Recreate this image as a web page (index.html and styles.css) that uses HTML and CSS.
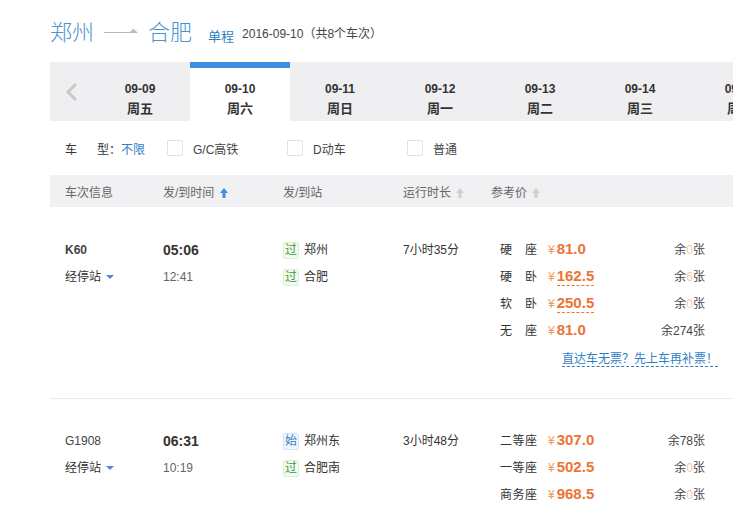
FILE: index.html
```html
<!DOCTYPE html>
<html lang="zh-CN">

<head>
  <meta charset="UTF-8" />
  <meta name="viewport" content="width=device-width, initial-scale=1.0" />
  <title>郑州 - 合肥</title>
  <link rel="stylesheet" href="styles.css">
</head>

<body>
  <div class="page">
    <div class="title">
      <span class="city">郑州</span>
      <svg class="way" width="34" height="10" viewBox="0 0 34 10">
        <line x1="0" y1="7.5" x2="26" y2="7.5" stroke="#b5b5b5" stroke-width="1" />
        <path d="M25 8 L29.5 3.5 L34 8 Z" fill="#bdbdbd" />
      </svg>
      <span class="city">合肥</span>
      <span class="trip">单程</span>
      <span class="info">2016-09-10（共8个车次）</span>
    </div>

    <div class="dates">
      <div class="prev">
        <svg width="14" height="20" viewBox="0 0 14 20">
          <path d="M11 2 L3 10 L11 18" fill="none" stroke="#c9c9cb" stroke-width="3" />
        </svg>
      </div>
      <div class="day"><b>09-09</b><b class="wd">周五</b></div>
      <div class="day active"><b>09-10</b><b class="wd">周六</b></div>
      <div class="day"><b>09-11</b><b class="wd">周日</b></div>
      <div class="day"><b>09-12</b><b class="wd">周一</b></div>
      <div class="day"><b>09-13</b><b class="wd">周二</b></div>
      <div class="day"><b>09-14</b><b class="wd">周三</b></div>
      <div class="day"><b>09-15</b><b class="wd">周四</b></div>
    </div>

    <div class="filter">
      <span class="label">车<i class="sp"></i>型：</span><span class="any">不限</span>
      <label class="opt"><span class="box"></span>G/C高铁</label>
      <label class="opt"><span class="box"></span>D动车</label>
      <label class="opt"><span class="box"></span>普通</label>
    </div>

    <div class="thead">
      <span>车次信息</span>
      <span>发/到时间 <svg class="sort" width="8" height="10" viewBox="0 0 8 10"><path d="M4 0 L8 5 L5.5 5 L5.5 10 L2.5 10 L2.5 5 L0 5 Z" fill="#3b8ee0" /></svg></span>
      <span>发/到站</span>
      <span>运行时长 <svg class="sort" width="8" height="10" viewBox="0 0 8 10"><path d="M4 0 L8 5 L5.5 5 L5.5 10 L2.5 10 L2.5 5 L0 5 Z" fill="#cfcfcf" /></svg></span>
      <span>参考价 <svg class="sort" width="8" height="10" viewBox="0 0 8 10"><path d="M4 0 L8 5 L5.5 5 L5.5 10 L2.5 10 L2.5 5 L0 5 Z" fill="#cfcfcf" /></svg></span>
    </div>

    <div class="train first">
      <div class="col">
        <div class="no bold">K60</div>
        <div class="stops">经停站 <span class="caret"></span></div>
      </div>
      <div class="col">
        <div class="dep">05:06</div>
        <div class="arr">12:41</div>
      </div>
      <div class="col">
        <div><span class="tag pass">过</span>郑州</div>
        <div><span class="tag pass">过</span>合肥</div>
      </div>
      <div class="col">
        <div>7小时35分</div>
      </div>
      <div class="col seats">
        <div class="seat"><span class="name">硬 座</span><span class="price">¥<b>81.0</b></span><span class="left">余<em>0</em>张</span></div>
        <div class="seat"><span class="name">硬 卧</span><span class="price">¥<b class="dash">162.5</b></span><span class="left">余<em>6</em>张</span></div>
        <div class="seat"><span class="name">软 卧</span><span class="price">¥<b class="dash">250.5</b></span><span class="left">余<em>0</em>张</span></div>
        <div class="seat"><span class="name">无 座</span><span class="price">¥<b>81.0</b></span><span class="left">余274张</span></div>
        <div class="tip"><a href="#">直达车无票？先上车再补票！</a></div>
      </div>
    </div>

    <div class="train">
      <div class="col">
        <div class="no">G1908</div>
        <div class="stops">经停站 <span class="caret"></span></div>
      </div>
      <div class="col">
        <div class="dep">06:31</div>
        <div class="arr">10:19</div>
      </div>
      <div class="col">
        <div><span class="tag start">始</span>郑州东</div>
        <div><span class="tag pass">过</span>合肥南</div>
      </div>
      <div class="col">
        <div>3小时48分</div>
      </div>
      <div class="col seats">
        <div class="seat"><span class="name">二等座</span><span class="price">¥<b>307.0</b></span><span class="left">余78张</span></div>
        <div class="seat"><span class="name">一等座</span><span class="price">¥<b>502.5</b></span><span class="left">余<em>0</em>张</span></div>
        <div class="seat"><span class="name">商务座</span><span class="price">¥<b>968.5</b></span><span class="left">余<em>0</em>张</span></div>
      </div>
    </div>
  </div>
</body>

</html>
```

FILE: styles.css
```css
*,
::before,
::after {
  box-sizing: border-box;
}

html {
  font-family: 'Liberation Sans', Arial, 'Noto Sans CJK SC', sans-serif;
  font-size: 12px;
  color: #333;
}

body {
  margin: 0;
  overflow: hidden;
}

.page {
  padding-left: 50px;
  width: 800px;
}

/* title */
.title {
  height: 62px;
  display: flex;
  align-items: center;
  padding-bottom: 2px;
}

.city {
  font-size: 22px;
  color: #4a93cf;
  font-family: 'Noto Sans CJK SC', sans-serif;
  font-weight: 300;
}

.way {
  margin: 0 10px 0 10px;
}

.trip {
  font-size: 13px;
  color: #2f7fc4;
  margin: 10px 8px 0 16px;
}

.info {
  margin-top: 4px;
  color: #444;
}

/* dates */
.dates {
  display: flex;
  height: 59px;
  background: #efeef0;
}

.prev {
  width: 40px;
  flex: none;
  display: flex;
  align-items: center;
  justify-content: center;
  padding-left: 4px;
}

.day {
  width: 100px;
  flex: none;
  display: flex;
  flex-direction: column;
  align-items: center;
  padding-top: 12px;
  line-height: 19px;
  border-top: 6px solid transparent;
  color: #333;
}

.day .wd {
  font-size: 13px;
}

.day.active {
  background: #fff;
  border-top-color: #3b8ee0;
}

/* filter */
.filter {
  height: 54px;
  display: flex;
  align-items: center;
  padding-left: 15px;
}

.label .sp {
  display: inline-block;
  width: 20px;
}

.any {
  color: #2f7fc4;
  width: 46px;
}

.opt {
  display: flex;
  align-items: center;
  width: 120px;
  color: #444;
}

.box {
  width: 16px;
  height: 16px;
  border: 1px solid #e2e2e2;
  border-radius: 2px;
  margin-right: 10px;
}

/* table */
.thead,
.train {
  display: grid;
  grid-template-columns: 98px 120px 120px 88px 214px;
  padding-left: 15px;
}

.thead {
  height: 32px;
  align-items: center;
  background: #f1f0f2;
  color: #666;
}

.sort {
  margin-left: 2px;
  vertical-align: -1px;
}

.train {
  padding: 29px 0 27px 15px;
  line-height: 27px;
  border-bottom: 1px solid #e9e9e9;
}

.train.first {
  padding-top: 30px;
  padding-bottom: 24px;
}

.train:last-child {
  border-bottom: none;
}

.no {
  color: #444;
}

.bold {
  font-weight: bold;
}

.caret {
  display: inline-block;
  width: 0;
  height: 0;
  border-left: 4px solid transparent;
  border-right: 4px solid transparent;
  border-top: 4px solid #3b8ee0;
  vertical-align: 2px;
  margin-left: 2px;
}

.dep {
  font-size: 14px;
  font-weight: bold;
}

.arr {
  color: #666;
}

.tag {
  display: inline-block;
  width: 16px;
  height: 17px;
  line-height: 15px;
  text-align: center;
  margin-right: 5px;
  border: 1px solid;
  border-radius: 2px;
}

.tag.pass {
  color: #3d9a3d;
  background: #f3faf0;
  border-color: #dcefd5;
}

.tag.start {
  color: #2f7fc4;
  background: #f0f6fc;
  border-color: #d3e5f5;
}

.seats {
  padding-left: 9px;
}

.seat {
  display: flex;
  align-items: center;
  height: 27px;
}

.name {
  width: 37px;
  text-align: justify;
  text-align-last: justify;
  margin-right: 11px;
}

.price {
  flex: 1;
  color: #f29a5a;
}

.price b {
  font-size: 15px;
  line-height: 18px;
  color: #ec7434;
  margin-left: 2px;
}

.price .dash {
  border-bottom: 1px dashed #ec7434;
  display: inline-block;
}

.left {
  color: #444;
}

.left em {
  font-style: normal;
  color: #f7c9a6;
}

.tip {
  text-align: right;
  margin-right: -13px;
  line-height: 29px;
}

.tip a {
  color: #2f7fc4;
  text-decoration: none;
  border-bottom: 1px dashed #2f7fc4;
}
```
